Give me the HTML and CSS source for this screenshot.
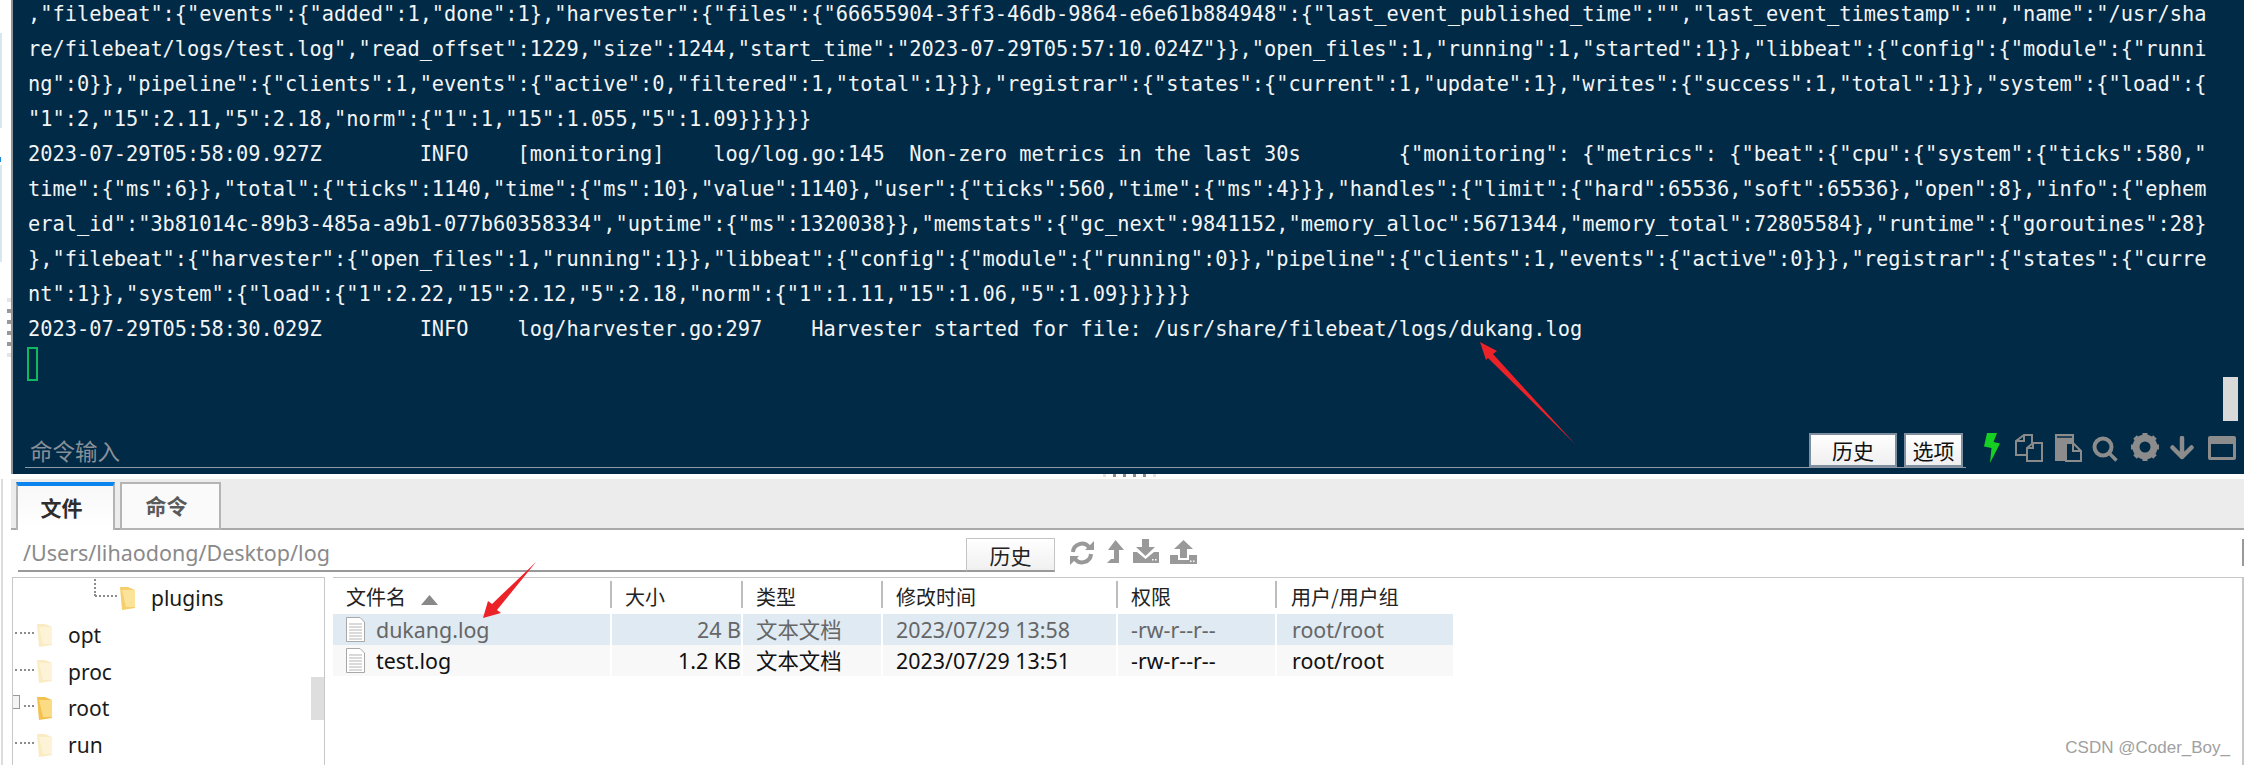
FILE: index.html
```html
<!DOCTYPE html>
<html lang="zh">
<head>
<meta charset="utf-8">
<title>FinalShell</title>
<link rel="stylesheet" href="styles.css">
</head>
<body>
<div class="app">
  <section class="top">
    <div class="strip">
      <i class="strip-block b1"></i>
      <i class="strip-dot"></i>
      <i class="strip-block b2"></i>
      <div class="strip-grips"><i></i><i></i><i></i><i></i><i></i><i></i></div>
    </div>
    <div class="terminal">
      <div class="log">
        <div>,"filebeat":{"events":{"added":1,"done":1},"harvester":{"files":{"66655904-3ff3-46db-9864-e6e61b884948":{"last_event_published_time":"","last_event_timestamp":"","name":"/usr/sha</div>
        <div>re/filebeat/logs/test.log","read_offset":1229,"size":1244,"start_time":"2023-07-29T05:57:10.024Z"}},"open_files":1,"running":1,"started":1}},"libbeat":{"config":{"module":{"runni</div>
        <div>ng":0}},"pipeline":{"clients":1,"events":{"active":0,"filtered":1,"total":1}}},"registrar":{"states":{"current":1,"update":1},"writes":{"success":1,"total":1}},"system":{"load":{</div>
        <div>"1":2,"15":2.11,"5":2.18,"norm":{"1":1,"15":1.055,"5":1.09}}}}}}</div>
        <div>2023-07-29T05:58:09.927Z        INFO    [monitoring]    log/log.go:145  Non-zero metrics in the last 30s        {"monitoring": {"metrics": {"beat":{"cpu":{"system":{"ticks":580,"</div>
        <div>time":{"ms":6}},"total":{"ticks":1140,"time":{"ms":10},"value":1140},"user":{"ticks":560,"time":{"ms":4}}},"handles":{"limit":{"hard":65536,"soft":65536},"open":8},"info":{"ephem</div>
        <div>eral_id":"3b81014c-89b3-485a-a9b1-077b60358334","uptime":{"ms":1320038}},"memstats":{"gc_next":9841152,"memory_alloc":5671344,"memory_total":72805584},"runtime":{"goroutines":28}</div>
        <div>},"filebeat":{"harvester":{"open_files":1,"running":1}},"libbeat":{"config":{"module":{"running":0}},"pipeline":{"clients":1,"events":{"active":0}}},"registrar":{"states":{"curre</div>
        <div>nt":1}},"system":{"load":{"1":2.22,"15":2.12,"5":2.18,"norm":{"1":1.11,"15":1.06,"5":1.09}}}}}}</div>
        <div>2023-07-29T05:58:30.029Z        INFO    log/harvester.go:297    Harvester started for file: /usr/share/filebeat/logs/dukang.log</div>
      </div>
      <div class="cursor"></div>
      <div class="scroll-thumb"></div>
      <div class="inputrow">
        <div class="cmd">
          <span class="cmd-label">命令输入</span>
          <button class="cmd-btn wide">历史</button>
          <button class="cmd-btn">选项</button>
        </div>
        <svg class="i-bolt" viewBox="0 0 16 30" width="16" height="30"><path d="M3 0H13L9.500 9L16 10.500L6 30L7.500 15L0 13.500Z" fill="#16cf22"/></svg>
        <svg class="i-copy" viewBox="0 0 28 28" width="28" height="28"><g fill="none" stroke="#8a8a8a" stroke-width="2"><path d="M17 9V1H9L1 7V21H11"/><path d="M9 1V7H1"/><path d="M27 9H18L12 14V27H27Z"/><path d="M18 9V14H12"/></g></svg>
        <svg class="i-paste" viewBox="0 0 28 28" width="28" height="28"><path d="M1 0H20V9H12V27H1Z" fill="#8c8c8c"/><path d="M3 3H18" stroke="#012a47" stroke-width="1.500"/><path d="M12 9H19L27 17V27H12Z" fill="#012a47" stroke="#8c8c8c" stroke-width="2"/><path d="M19 9V17H27" fill="none" stroke="#8c8c8c" stroke-width="2"/></svg>
        <svg class="i-search" viewBox="0 0 26 26" width="26" height="26"><circle cx="11" cy="11" r="8.500" fill="none" stroke="#8c8c8c" stroke-width="4"/><path d="M17 17L24.500 24.500" stroke="#8c8c8c" stroke-width="3.500"/></svg>
        <svg class="i-gear" viewBox="0 0 28 28" width="28" height="28"><circle cx="14" cy="14" r="9" fill="none" stroke="#8c8c8c" stroke-width="7"/><g stroke="#8c8c8c" stroke-width="5"><path d="M14 0V6M14 22V28M0 14H6M22 14H28M4 4L8 8M20 20L24 24M24 4L20 8M8 20L4 24"/></g></svg>
        <svg class="i-down" viewBox="0 0 24 24" width="24" height="24"><path d="M12 2V21M2.500 11.500L12 21L21.500 11.500" fill="none" stroke="#8c8c8c" stroke-width="4.500" stroke-linecap="round" stroke-linejoin="round"/></svg>
        <svg class="i-window" viewBox="0 0 28 24" width="28" height="24"><path fill-rule="evenodd" d="M2 0H26A2 2 0 0 1 28 2V22A2 2 0 0 1 26 24H2A2 2 0 0 1 0 22V2A2 2 0 0 1 2 0ZM3 8V21H25V8Z" fill="#8c8c8c"/></svg>
      </div>
    </div>
  </section>

  <section class="splitter"><i></i><i></i><i></i><i></i><i></i><i></i></section>

  <section class="lower">
    <nav class="band">
      <div class="tab active">文件</div>
      <div class="tab">命令</div>
    </nav>

    <div class="pathrow">
      <div class="pathfield">/Users/lihaodong/Desktop/log</div>
      <button class="hist-btn">历史</button>
      <svg class="t-refresh" viewBox="0 0 24 24" width="24" height="24"><g fill="none" stroke="#999" stroke-width="4"><path d="M3 11A9 9 0 0 1 19 6"/><path d="M21 13A9 9 0 0 1 5 18"/></g><path d="M15 9H24V0Z M9 15H0V24Z" fill="#999"/></svg>
      <svg class="t-up" viewBox="0 0 17 23" width="17" height="23"><path d="M8.500 0L17 10H12V23H0L4 19H7V10H1Z" fill="#999"/></svg>
      <svg class="t-dl" viewBox="0 0 26 24" width="26" height="24"><path d="M9 0H16V8H22L12.500 17L3 8H9Z" fill="#999"/><path d="M0 13H4L12.500 20L21 13H26V24H0Z" fill="#999"/><path d="M19 20H20.500V21.500H19ZM22 20H23.500V21.500H22Z" fill="#fff"/></svg>
      <svg class="t-ul" viewBox="0 0 27 24" width="27" height="24"><path d="M13.500 0L23 9H17V18H10V9H4Z" fill="#999"/><path d="M0 15H8V20H19V15H27V24H0Z" fill="#999"/><path d="M20 20.500H21.500V22H20ZM23 20.500H24.500V22H23Z" fill="#fff"/></svg>
      <i class="edge-bar"></i>
    </div>

    <div class="panels">
      <aside class="tree">
        <div class="node deep">
          <i class="vdots"></i><i class="dots"></i>
          <svg class="folder" viewBox="0 0 16 23" width="16" height="23"><path d="M0 0H8L15 3V21L2 23Z" fill="#f5cf6c"/><path d="M2 3H15V20H6Z" fill="#fbe39a"/></svg>
          <span>plugins</span>
        </div>
        <div class="node"><i class="dots"></i><svg class="folder faded" viewBox="0 0 16 23" width="16" height="23"><path d="M0 0H8L15 3V21L2 23Z" fill="#f5cf6c"/><path d="M2 3H15V20H6Z" fill="#fbe39a"/></svg><span>opt</span></div>
        <div class="node"><i class="dots"></i><svg class="folder faded" viewBox="0 0 16 23" width="16" height="23"><path d="M0 0H8L15 3V21L2 23Z" fill="#f5cf6c"/><path d="M2 3H15V20H6Z" fill="#fbe39a"/></svg><span>proc</span></div>
        <div class="node"><i class="plus"></i><i class="dots short"></i><svg class="folder" viewBox="0 0 16 23" width="16" height="23"><path d="M0 0H8L15 3V21L2 23Z" fill="#f2c14e"/><path d="M2 3H15V20H6Z" fill="#fbdc85"/></svg><span>root</span></div>
        <div class="node"><i class="dots"></i><svg class="folder faded" viewBox="0 0 16 23" width="16" height="23"><path d="M0 0H8L15 3V21L2 23Z" fill="#f5cf6c"/><path d="M2 3H15V20H6Z" fill="#fbe39a"/></svg><span>run</span></div>
        <div class="tree-thumb"></div>
      </aside>

      <main class="list">
        <div class="row head">
          <div class="cell">文件名<svg class="sort" viewBox="0 0 17 10" width="17" height="10"><path d="M8.500 0L17 10H0Z" fill="#888"/></svg></div>
          <div class="cell">大小</div>
          <div class="cell">类型</div>
          <div class="cell">修改时间</div>
          <div class="cell">权限</div>
          <div class="cell last">用户/用户组</div>
        </div>
        <div class="row file selected">
          <div class="cell name"><svg class="doc" viewBox="0 0 19 25" width="19" height="25"><path d="M.500 .500H14L18.500 5V24.500H.500Z" fill="#fff" stroke="#a8a8a8"/><path d="M3 7H16M3 10H16M3 13H16M3 16H16M3 19H16M3 22H16" stroke="#b5b5b5"/></svg><span>dukang.log</span></div>
          <div class="cell size">24 B</div>
          <div class="cell">文本文档</div>
          <div class="cell">2023/07/29 13:58</div>
          <div class="cell">-rw-r--r--</div>
          <div class="cell last">root/root</div>
        </div>
        <div class="row file">
          <div class="cell name"><svg class="doc" viewBox="0 0 19 25" width="19" height="25"><path d="M.500 .500H14L18.500 5V24.500H.500Z" fill="#fff" stroke="#a8a8a8"/><path d="M3 7H16M3 10H16M3 13H16M3 16H16M3 19H16M3 22H16" stroke="#b5b5b5"/></svg><span>test.log</span></div>
          <div class="cell size">1.2 KB</div>
          <div class="cell">文本文档</div>
          <div class="cell">2023/07/29 13:51</div>
          <div class="cell">-rw-r--r--</div>
          <div class="cell last">root/root</div>
        </div>
        <div class="watermark">CSDN @Coder_Boy_</div>
      </main>
    </div>
  </section>

  <svg class="marks" viewBox="0 0 2244 765" width="2244" height="765">
    <path d="M1480 342L1497 351L1493 354L1575 444L1488 358L1486 360Z" fill="#ec2229"/>
    <path d="M483 618L488 601L492 604L536 562L497 610L501 613Z" fill="#ec2229"/>
  </svg>
</div>
</body>
</html>
```
FILE: styles.css
```css
* { box-sizing: border-box; }
html, body { margin: 0; padding: 0; }
body {
  width: 2244px;
  height: 765px;
  overflow: hidden;
  background: #fff;
  font-family: "Noto Sans", "Noto Sans CJK SC", sans-serif;
}
.app { position: relative; width: 2244px; height: 765px; display: flex; flex-direction: column; }
i { display: block; }

/* top: terminal */
.top { display: flex; height: 474px; }
.strip { width: 13px; border-right: 2px solid #8f9499; position: relative; padding-top: 33px; display: flex; flex-direction: column; }
.strip-block { width: 2px; height: 95px; background: #d8e6ee; }
.strip-dot { width: 1px; height: 5px; margin: 29px 0 1px; background: #1e88d8; }
.strip-block.b2 { height: 97px; margin-top: 2px; }
.strip-grips { position: absolute; left: 7px; top: 298px; display: flex; flex-direction: column; gap: 7px; }
.strip-grips i { width: 4px; height: 4px; background: #999; }
.strip-grips i:first-child, .strip-grips i:last-child { background: #e4e4e4; }

.terminal { flex: 1; min-width: 0; position: relative; display: flex; flex-direction: column; background: #012a47; overflow: hidden; }
.log {
  margin-top: -3px;
  padding-left: 15px;
  color: #f2f4f5;
  font-family: "DejaVu Sans Mono", "Liberation Mono", monospace;
  font-size: 20.34px;
  line-height: 35px;
}
.log div { white-space: pre; height: 35px; }
.cursor { width: 11px; height: 34px; margin-left: 14px; border: 2px solid #10b860; }
.scroll-thumb { position: absolute; right: 6px; top: 377px; width: 15px; height: 44px; background: #d9d9d9; }
.inputrow { margin-top: auto; padding: 0 0 6px 12px; display: flex; align-items: flex-start; height: 41px; }
.cmd { flex: none; width: 1941px; height: 35px; border-bottom: 1px solid #8d9aa5; display: flex; align-items: flex-start; gap: 7px; padding-right: 3px; }
.cmd-label { flex: 1; margin: 0 0 0 5px; color: #8a9097; font-size: 22.5px; line-height: 34px; font-family: "Noto Sans CJK SC", sans-serif; }
.cmd-btn {
  width: 59px; height: 34px; padding: 0;
  border: 2px solid #7f8f9f;
  background: linear-gradient(#fff, #efefef);
  color: #111;
  font-family: "Noto Sans CJK SC", sans-serif;
  font-size: 21px;
  line-height: 28px;
}
.cmd-btn.wide { width: 88px; }
.inputrow svg { flex: none; }
.i-bolt { margin-left: 18px; margin-top: 0; }
.i-copy { margin-left: 15px; margin-top: 1px; }
.i-paste { margin-left: 11px; margin-top: 1px; }
.i-search { margin-left: 10px; margin-top: 3px; }
.i-gear { margin-left: 13px; }
.i-down { margin-left: 11px; margin-top: 3px; }
.i-window { margin-left: 14px; margin-top: 3px; }

.splitter { height: 5px; display: flex; justify-content: center; gap: 7px; padding: 0 0 0 14px; }
.splitter i { width: 3px; height: 3px; margin-top: 0; background: #8a8a8a; }
.splitter i:first-child, .splitter i:last-child { background: #e0e0e0; }

/* lower */
.lower { flex: 1; min-height: 0; margin-left: 1px; border-left: 2px solid #dcdcdc; display: flex; flex-direction: column; }
.band { margin-left: 8px; height: 51px; padding: 3px 0 0 5px; background: #ececec; border-bottom: 2px solid #a9a9a9; display: flex; gap: 5px; }
.tab {
  width: 101px; height: 48px;
  border: 2px solid #b4b4b4;
  padding: 0 8px 2px 0;
  background: #fafafa;
  color: #5a5a5a;
  font-family: "Noto Sans CJK SC", sans-serif;
  font-size: 21px; font-weight: 700;
  display: flex; align-items: center; justify-content: center;
}
.tab.active { width: 99px; height: 48px; border-top: 4px solid #0a84ee; border-bottom: 0; background: linear-gradient(#f8f8f8, #fff); color: #2e2e2e; }

.pathrow { height: 47px; padding: 8px 0 0 15px; display: flex; align-items: flex-start; }
.pathfield { width: 948px; height: 34px; border-bottom: 2px solid #999; padding-left: 5px; color: #8a8a8a; font-size: 21.5px; line-height: 30px; }
.hist-btn { width: 89px; height: 34px; padding: 0; border: 1px solid #c4c4c4; border-bottom: 2px solid #999; background: linear-gradient(#fff, #f0f0f0); color: #222; font-family: "Noto Sans CJK SC", sans-serif; font-size: 21px; line-height: 28px; }
.t-refresh { margin: 3px 0 0 15px; }
.t-up { margin: 2px 0 0 13px; }
.t-dl { margin: 1px 0 0 9px; }
.t-ul { margin: 2px 0 0 11px; }
.edge-bar { margin-left: auto; margin-top: 1px; width: 2px; height: 27px; background: #999; }

.panels { flex: 1; min-height: 0; display: flex; gap: 8px; padding-left: 9px; }
.tree { width: 313px; position: relative; border: 1px solid #c8c8c8; border-bottom: 0; padding-top: 2px; display: grid; grid-auto-rows: 36.7px; align-content: start; overflow: hidden; font-size: 21px; color: #1a1a1a; }
.node { display: flex; align-items: center; position: relative; padding-left: 2px; }
.node span { margin-left: 15px; line-height: 26px; }
.dots { width: 19px; border-top: 2px dotted #8c8c8c; margin-right: 3px; margin-top: -4px; }
.node.deep { padding-left: 82px; }
.node.deep .dots { width: 22px; margin-right: 3px; }
.vdots { position: absolute; left: 81px; top: -4px; height: 20px; border-left: 2px dotted #8c8c8c; }
.folder { flex: none; }
.faded { opacity: .4; }
.plus { position: absolute; left: -1px; top: 5px; width: 8px; height: 14px; border: 1px solid #999; border-left: 0; background: #f4f4f4; }
.dots.short { width: 10px; margin-left: 9px; }
.tree-thumb { position: absolute; right: 0; top: 99px; width: 13px; height: 43px; background: #dedede; }

.list { flex: 1; min-width: 0; position: relative; border-top: 1px solid #c8c8c8; border-right: 2px solid #c8c8c8; padding-top: 3px; font-size: 20px; }
.row { display: grid; grid-template-columns: 279px 131px 140px 235px 159px 176px; width: 1120px; }
.cell { padding-left: 13px; white-space: nowrap; }
.head { height: 33px; padding-bottom: 6px; }
.head .cell { height: 27px; font-family: "Noto Sans CJK SC", sans-serif; font-size: 20px; line-height: 32px; color: #222; border-right: 2px solid #bdbdbd; }
.head .cell.last { border-right: 0; padding-left: 14px; }
.sort { margin-left: 15px; }
.file { height: 31px; line-height: 31px; color: #111; background: #f8f8f8; }
.file .cell { font-family: "Noto Sans", "Noto Sans CJK SC", sans-serif; font-size: 21.4px; border-right: 2px solid #fff; }
.file .cell.last { border-right: 0; padding-left: 15px; }
.file .name { display: flex; align-items: center; gap: 11px; }
.file .size { padding: 0 0 0 0; text-align: right; }
.selected { background: #dfeaf3; color: #666; }
.doc { flex: none; }
.watermark { position: absolute; right: 12px; bottom: 7px; font-family: "Liberation Sans", sans-serif; font-size: 17px; color: #a0a0a0; }

.marks { position: absolute; left: 0; top: 0; pointer-events: none; }
```
